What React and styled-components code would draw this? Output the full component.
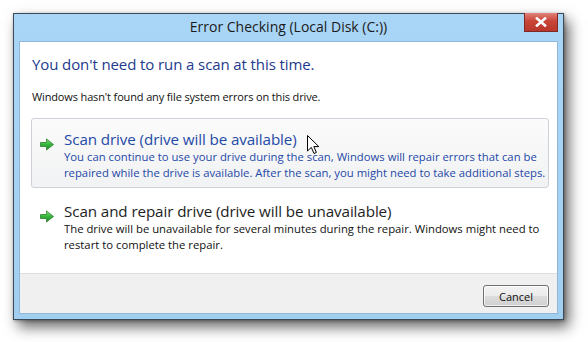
import React from "react";
import styled, { createGlobalStyle } from "styled-components";

const Global = createGlobalStyle`
  html, body { margin: 0; padding: 0; background: #ffffff; }
  body { font-family: "Open Sans", "Noto Sans", "Liberation Sans", sans-serif; }
`;

const Page = styled.div`
  width: 588px;
  height: 342px;
  padding: 13px 0 0 13px;
  box-sizing: border-box;
  overflow: hidden;
`;

const Window = styled.div`
  width: 551px;
  height: 307px;
  box-sizing: border-box;
  border: 1px solid #3d4b58;
  background: linear-gradient(#a9d5f6, #a2cff0);
  padding: 0 5px 5px 5px;
  display: flex;
  flex-direction: column;
  box-shadow: 5px 7px 13px rgba(0, 0, 0, 0.6), 1px 1px 3px rgba(0, 0, 0, 0.3);
`;

const TitleBar = styled.div`
  height: 27px;
  display: grid;
  grid-template-columns: 1fr auto 1fr;
  align-items: start;
`;

const Title = styled.div`
  grid-column: 2;
  font-size: 14px;
  line-height: 14px;
  padding-top: 6px;
  color: #1b1b1b;
`;

const CloseButton = styled.div`
  grid-column: 3;
  justify-self: end;
  margin-top: -1px;
  width: 34px;
  height: 19px;
  box-sizing: border-box;
  border: 1px solid #7d2a24;
  border-top: none;
  background: linear-gradient(#e2837a, #c84437 45%, #b9372c);
  display: flex;
  align-items: center;
  justify-content: center;
`;

const Client = styled.div`
  flex: 1;
  display: flex;
  flex-direction: column;
  background: #ffffff;
  border: 1px solid #8fb8d8;
`;

const Main = styled.div`
  flex: 1;
  padding: 12px 8px 0 11px;
  display: flex;
  flex-direction: column;
`;

const Heading = styled.div`
  font-size: 15px;
  line-height: 20px;
  color: #1e3a8e;
  padding-left: 1px;
  letter-spacing: -0.1px;
`;

const Info = styled.div`
  margin-top: 15px;
  font-size: 11px;
  line-height: 16px;
  color: #111;
  padding-left: 1px;
  letter-spacing: -0.14px;
`;

const CommandLink = styled.div`
  margin-top: ${(p) => p.$gap}px;
  height: 70px;
  box-sizing: border-box;
  padding: 11px 6px 0 7px;
  border: 1px solid ${(p) => (p.$hover ? "#cdd3d9" : "transparent")};
  border-radius: 3px;
  background: ${(p) => (p.$hover ? "linear-gradient(#fbfbfb, #f1f2f3)" : "transparent")};
  display: grid;
  grid-template-columns: 25px 1fr;
  position: relative;
`;

const ArrowCell = styled.div`
  padding-top: 4px;
`;

const LinkTitle = styled.div`
  font-size: 15.2px;
  line-height: 19px;
  color: ${(p) => (p.$hover ? "#1f4aa6" : "#1d1d1d")};
  letter-spacing: -0.1px;
  white-space: nowrap;
`;

const LinkDesc = styled.div`
  font-size: 11.3px;
  line-height: 16px;
  white-space: nowrap;
  color: ${(p) => (p.$hover ? "#2448a8" : "#111")};
`;

const Cursor = styled.svg`
  position: absolute;
  left: 275px;
  top: 16px;
`;

const Footer = styled.div`
  height: 40px;
  box-sizing: border-box;
  border-top: 1px solid #dcdcdc;
  background: #f0f0f0;
  display: flex;
  justify-content: flex-end;
  align-items: flex-start;
  padding: 11px 8px 0 0;
`;

const Button = styled.div`
  width: 66px;
  height: 22px;
  box-sizing: border-box;
  border: 1px solid #707070;
  border-radius: 3px;
  background: linear-gradient(#f3f3f3 0%, #ebebeb 50%, #dddddd 51%, #cfcfcf 100%);
  box-shadow: inset 0 0 0 1px rgba(255, 255, 255, 0.7);
  display: flex;
  align-items: center;
  justify-content: center;
  font-size: 11px;
  color: #111;
`;

const GreenArrow = () => (
  <svg width="16" height="13" viewBox="0 0 16 13">
    <defs>
      <linearGradient id="ga" x1="0" y1="0" x2="0" y2="1">
        <stop offset="0" stopColor="#86e880" />
        <stop offset="0.5" stopColor="#34b53a" />
        <stop offset="1" stopColor="#1f8f28" />
      </linearGradient>
    </defs>
    <path
      d="M1.5 4.5 H7.5 V1 L14.5 6.5 L7.5 12 V8.5 H1.5 Z"
      fill="url(#ga)"
      stroke="#2c7d2f"
      strokeWidth="0.8"
      strokeLinejoin="round"
    />
  </svg>
);

export default function App() {
  return (
    <Page>
      <Global />
      <Window>
        <TitleBar>
          <Title>Error Checking (Local Disk (C:))</Title>
          <CloseButton>
            <svg width="12" height="10" viewBox="0 0 12 10">
              <path
                d="M2 1.5 L10 8.5 M10 1.5 L2 8.5"
                stroke="#ffffff"
                strokeWidth="2.6"
                strokeLinecap="square"
              />
            </svg>
          </CloseButton>
        </TitleBar>
        <Client>
          <Main>
            <Heading>You don't need to run a scan at this time.</Heading>
            <Info>Windows hasn't found any file system errors on this drive.</Info>
            <CommandLink $hover $gap={13}>
              <ArrowCell>
                <GreenArrow />
              </ArrowCell>
              <div>
                <LinkTitle $hover>Scan drive (drive will be available)</LinkTitle>
                <LinkDesc $hover>
                  You can continue to use your drive during the scan, Windows will repair errors that can be
                  <br />
                  repaired while the drive is available. After the scan, you might need to take additional steps.
                </LinkDesc>
              </div>
              <Cursor width="13" height="20" viewBox="0 0 13 20">
                <path
                  d="M0.5 0.5 L0.5 16 L4.3 12.4 L7 18.5 L9.4 17.4 L6.8 11.6 L11.8 11.6 Z"
                  fill="#ffffff"
                  stroke="#000000"
                  strokeWidth="1"
                  strokeLinejoin="round"
                />
              </Cursor>
            </CommandLink>
            <CommandLink $gap={2}>
              <ArrowCell>
                <GreenArrow />
              </ArrowCell>
              <div>
                <LinkTitle>Scan and repair drive (drive will be unavailable)</LinkTitle>
                <LinkDesc>
                  The drive will be unavailable for several minutes during the repair. Windows might need to
                  <br />
                  restart to complete the repair.
                </LinkDesc>
              </div>
            </CommandLink>
          </Main>
          <Footer>
            <Button>Cancel</Button>
          </Footer>
        </Client>
      </Window>
    </Page>
  );
}
